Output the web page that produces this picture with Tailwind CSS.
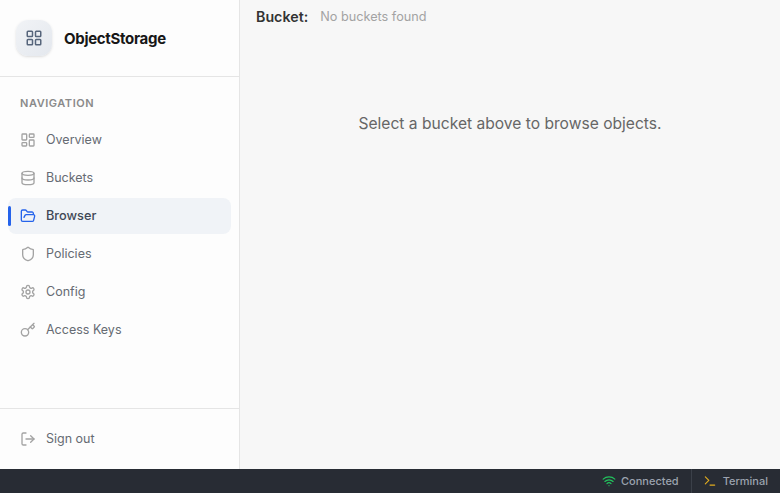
<!DOCTYPE html>
<html lang="en">
  <head>
    <meta charset="UTF-8" />
    <title>ObjectStorage</title>
    <script src="https://cdn.jsdelivr.net/npm/@tailwindcss/browser@4"></script>
  </head>
  <body class="h-[493px] w-[780px] overflow-hidden bg-[#f7f7f7] font-['Inter',sans-serif]">
    <div class="flex h-[469px]">
      <!-- Sidebar -->
      <aside class="flex w-[240px] shrink-0 flex-col border-r border-[#e5e5e5] bg-[#fdfdfd]">
        <div class="flex h-[77px] items-center gap-3 border-b border-[#e5e5e5] px-4">
          <div class="flex h-9 w-9 items-center justify-center rounded-xl bg-gradient-to-br from-[#f1f3f6] to-[#e4e8ee] shadow-sm">
            <svg class="h-[18px] w-[18px] text-[#56657b]" viewBox="0 0 24 24" fill="none" stroke="currentColor" stroke-width="2" stroke-linecap="round" stroke-linejoin="round">
              <rect x="3" y="3" width="7" height="7" rx="1" />
              <rect x="14" y="3" width="7" height="7" rx="1" />
              <rect x="3" y="14" width="7" height="7" rx="1" />
              <rect x="14" y="14" width="7" height="7" rx="1" />
            </svg>
          </div>
          <span class="pt-0.5 text-[15px] font-bold tracking-[-0.02em] text-[#171717]">ObjectStorage</span>
        </div>

        <nav class="flex-1 px-2 pt-5">
          <p class="mb-2 px-3 text-[11px] font-semibold leading-[13px] tracking-wider text-[#8a8a8a]">NAVIGATION</p>
          <div class="flex flex-col gap-0.5 pt-1">
            <a class="flex h-9 items-center gap-2.5 rounded-lg px-3 text-[12.5px] font-normal text-[#666b73]">
              <svg class="h-4 w-4 text-[#a3a3a3]" viewBox="0 0 24 24" fill="none" stroke="currentColor" stroke-width="2" stroke-linecap="round" stroke-linejoin="round">
                <rect x="3" y="3" width="7" height="9" rx="1" />
                <rect x="14" y="3" width="7" height="5" rx="1" />
                <rect x="14" y="12" width="7" height="9" rx="1" />
                <rect x="3" y="16" width="7" height="5" rx="1" />
              </svg>
              Overview
            </a>
            <a class="flex h-9 items-center gap-2.5 rounded-lg px-3 text-[12.5px] font-normal text-[#666b73]">
              <svg class="h-4 w-4 text-[#a3a3a3]" viewBox="0 0 24 24" fill="none" stroke="currentColor" stroke-width="2" stroke-linecap="round" stroke-linejoin="round">
                <ellipse cx="12" cy="5" rx="9" ry="3" />
                <path d="M3 5v14a9 3 0 0 0 18 0V5" />
                <path d="M3 12a9 3 0 0 0 18 0" />
              </svg>
              Buckets
            </a>
            <a class="relative flex h-9 items-center gap-2.5 rounded-lg bg-[#f0f3f7] px-3 text-[12.75px] font-medium text-[#3f4856]">
              <span class="absolute top-2 left-0 h-5 w-[3px] rounded-full bg-[#2563eb]"></span>
              <svg class="h-4 w-4 text-[#2563eb]" viewBox="0 0 24 24" fill="none" stroke="currentColor" stroke-width="2" stroke-linecap="round" stroke-linejoin="round">
                <path d="m6 14 1.5-2.9A2 2 0 0 1 9.24 10H20a2 2 0 0 1 1.94 2.5l-1.54 6a2 2 0 0 1-1.95 1.5H4a2 2 0 0 1-2-2V5a2 2 0 0 1 2-2h3.9a2 2 0 0 1 1.69.9l.81 1.2a2 2 0 0 0 1.67.9H18a2 2 0 0 1 2 2v2" />
              </svg>
              Browser
            </a>
            <a class="flex h-9 items-center gap-2.5 rounded-lg px-3 text-[12.5px] font-normal text-[#666b73]">
              <svg class="h-4 w-4 text-[#a3a3a3]" viewBox="0 0 24 24" fill="none" stroke="currentColor" stroke-width="2" stroke-linecap="round" stroke-linejoin="round">
                <path d="M20 13c0 5-3.5 7.5-7.66 8.95a1 1 0 0 1-.67-.01C7.5 20.5 4 18 4 13V6a1 1 0 0 1 1-1c2 0 4.5-1.2 6.24-2.72a1.17 1.17 0 0 1 1.52 0C14.51 3.81 17 5 19 5a1 1 0 0 1 1 1z" />
              </svg>
              Policies
            </a>
            <a class="flex h-9 items-center gap-2.5 rounded-lg px-3 text-[12.5px] font-normal text-[#666b73]">
              <svg class="h-4 w-4 text-[#a3a3a3]" viewBox="0 0 24 24" fill="none" stroke="currentColor" stroke-width="2" stroke-linecap="round" stroke-linejoin="round">
                <path d="M12.22 2h-.44a2 2 0 0 0-2 2v.18a2 2 0 0 1-1 1.73l-.43.25a2 2 0 0 1-2 0l-.15-.08a2 2 0 0 0-2.73.73l-.22.38a2 2 0 0 0 .73 2.73l.15.1a2 2 0 0 1 1 1.72v.51a2 2 0 0 1-1 1.74l-.15.09a2 2 0 0 0-.73 2.73l.22.38a2 2 0 0 0 2.73.73l.15-.08a2 2 0 0 1 2 0l.43.25a2 2 0 0 1 1 1.73V20a2 2 0 0 0 2 2h.44a2 2 0 0 0 2-2v-.18a2 2 0 0 1 1-1.73l.43-.25a2 2 0 0 1 2 0l.15.08a2 2 0 0 0 2.73-.73l.22-.39a2 2 0 0 0-.73-2.73l-.15-.08a2 2 0 0 1-1-1.74v-.5a2 2 0 0 1 1-1.74l.15-.09a2 2 0 0 0 .73-2.73l-.22-.38a2 2 0 0 0-2.73-.73l-.15.08a2 2 0 0 1-2 0l-.43-.25a2 2 0 0 1-1-1.73V4a2 2 0 0 0-2-2z" />
                <circle cx="12" cy="12" r="3" />
              </svg>
              Config
            </a>
            <a class="flex h-9 items-center gap-2.5 rounded-lg px-3 text-[12.5px] font-normal text-[#666b73]">
              <svg class="h-4 w-4 text-[#a3a3a3]" viewBox="0 0 24 24" fill="none" stroke="currentColor" stroke-width="2" stroke-linecap="round" stroke-linejoin="round">
                <path d="m15.5 7.5 2.3 2.3a1 1 0 0 0 1.4 0l2.1-2.1a1 1 0 0 0 0-1.4L19 4" />
                <path d="m21 2-9.6 9.6" />
                <circle cx="7.5" cy="15.5" r="5.5" />
              </svg>
              Access Keys
            </a>
          </div>
        </nav>

        <div class="border-t border-[#e5e5e5] px-2 py-3">
          <a class="flex h-9 items-center gap-2.5 rounded-lg px-3 text-[12.5px] font-normal text-[#666b73]">
            <svg class="h-4 w-4 text-[#a3a3a3]" viewBox="0 0 24 24" fill="none" stroke="currentColor" stroke-width="2" stroke-linecap="round" stroke-linejoin="round">
              <path d="M9 21H5a2 2 0 0 1-2-2V5a2 2 0 0 1 2-2h4" />
              <path d="m16 17 5-5-5-5" />
              <path d="M21 12H9" />
            </svg>
            Sign out
          </a>
        </div>
      </aside>

      <!-- Main -->
      <main class="flex-1">
        <div class="flex items-center gap-3 px-4 pt-2">
          <span class="text-[14.25px] font-semibold leading-[17px] text-[#333333]">Bucket:</span>
          <span class="text-[12.7px] leading-[17px] text-[#a3a3a3]">No buckets found</span>
        </div>
        <p class="mt-[88px] text-center text-[15.6px] leading-[22px] text-[#666666]">Select a bucket above to browse objects.</p>
      </main>
    </div>

    <!-- Status bar -->
    <footer class="flex h-6 items-center justify-end bg-[#282c34] text-[11px] font-medium text-[#9ca3af]">
      <div class="flex h-full items-center gap-[5px] px-3">
        <svg class="h-3.5 w-3.5 text-[#22c55e]" viewBox="0 0 24 24" fill="none" stroke="currentColor" stroke-width="2" stroke-linecap="round" stroke-linejoin="round">
          <path d="M12 20h.01" />
          <path d="M2 8.82a15 15 0 0 1 20 0" />
          <path d="M5 12.859a10 10 0 0 1 14 0" />
          <path d="M8.5 16.429a5 5 0 0 1 7 0" />
        </svg>
        Connected
      </div>
      <div class="flex h-full items-center gap-1.5 border-l border-[#3b4049] pr-3 pl-[11px]">
        <svg class="h-3.5 w-3.5 text-[#e0ab1f]" viewBox="0 0 24 24" fill="none" stroke="currentColor" stroke-width="2" stroke-linecap="round" stroke-linejoin="round">
          <path d="m4 17 6-6-6-6" />
          <path d="M12 19h8" />
        </svg>
        Terminal
      </div>
    </footer>
  </body>
</html>
